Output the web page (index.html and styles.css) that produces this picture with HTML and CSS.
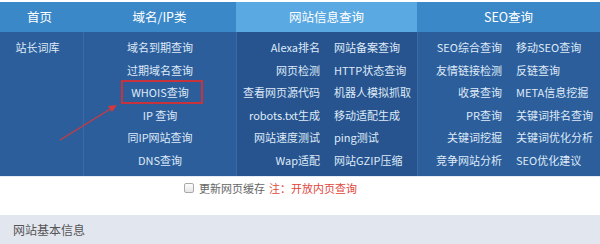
FILE: index.html
```html
<!DOCTYPE html>
<html>

<head>
    <meta charset="utf-8">
    <title>站长工具</title>
    <link rel="stylesheet" href="styles.css">
</head>

<body>
    <div class="nav">
        <div class="col col_home">
            <div class="tab">首页</div>
            <ul class="links">
                <li>站长词库</li>
            </ul>
        </div>
        <div class="col col_domain">
            <div class="tab">域名/IP类</div>
            <ul class="links">
                <li>域名到期查询</li>
                <li>过期域名查询</li>
                <li><span class="marked">WHOIS查询</span></li>
                <li>IP 查询</li>
                <li>同IP网站查询</li>
                <li>DNS查询</li>
            </ul>
        </div>
        <div class="col col_site active">
            <div class="tab">网站信息查询</div>
            <ul class="links two">
                <li>Alexa排名</li>
                <li>网站备案查询</li>
                <li>网页检测</li>
                <li>HTTP状态查询</li>
                <li>查看网页源代码</li>
                <li>机器人模拟抓取</li>
                <li>robots.txt生成</li>
                <li>移动适配生成</li>
                <li>网站速度测试</li>
                <li>ping测试</li>
                <li>Wap适配</li>
                <li>网站GZIP压缩</li>
            </ul>
        </div>
        <div class="col col_seo">
            <div class="tab">SEO查询</div>
            <ul class="links two">
                <li>SEO综合查询</li>
                <li>移动SEO查询</li>
                <li>友情链接检测</li>
                <li>反链查询</li>
                <li>收录查询</li>
                <li>META信息挖掘</li>
                <li>PR查询</li>
                <li>关键词排名查询</li>
                <li>关键词挖掘</li>
                <li>关键词优化分析</li>
                <li>竞争网站分析</li>
                <li>SEO优化建议</li>
            </ul>
        </div>
        <!-- red annotation arrow -->
        <svg class="arrow" width="600" height="176" viewBox="0 0 600 176">
            <line x1="60" y1="138" x2="112" y2="106" stroke="#d2383c" stroke-width="1.2" />
            <polygon points="117,103 108,104 112,110" fill="#d2383c" />
        </svg>
    </div>

    <div class="cache_row">
        <label class="cache">
            <input type="checkbox">
            <span class="box"></span>
            更新网页缓存
        </label>
        <span class="note">注：开放内页查询</span>
    </div>

    <div class="section_title">网站基本信息</div>
</body>

</html>
```

FILE: styles.css
```css
body {
    margin: 0;
    background-color: #fff;
    font-family: "Noto Sans CJK SC", "Noto Sans", sans-serif;
}

/* Top navigation */

.nav {
    position: relative;
    display: grid;
    grid-template-columns: 83px 153px 181px 1fr;
    margin-top: 2px;
    background-color: #2c5e9c;
    border-bottom: 1px solid #e4edf7;
}

.tab {
    height: 30px;
    line-height: 30px;
    text-align: center;
    background-color: #3a88c8;
    color: #fff;
    font-size: 12.5px;
}

.col_home .tab {
    padding-right: 4px;
}

.active {
    background-color: #27548f;
}

.active .tab {
    background-color: #5aa9e2;
}

.links {
    list-style: none;
    margin: 0;
    padding: 4px 0 5px 0;
    border-left: 1px solid #3a6ba7;
    font-size: 11px;
    line-height: 22.5px;
    color: #dfeaf7;
    text-align: center;
    white-space: nowrap;
}

.col_home .links {
    border-left: none;
    padding-right: 8px;
}

.links.two {
    display: grid;
    grid-template-columns: 1fr 1fr;
    column-gap: 14px;
}

.links.two li:nth-child(odd) {
    text-align: right;
}

.links.two li:nth-child(even) {
    text-align: left;
}

/* Red box drawn round WHOIS */

.marked {
    position: relative;
}

.marked:after {
    content: "";
    position: absolute;
    left: -10px;
    right: -14px;
    top: -4px;
    bottom: -4px;
    border: 2px solid #c8323c;
}

.arrow {
    position: absolute;
    left: 0;
    top: 0;
    pointer-events: none;
}

/* Cache checkbox */

.cache_row {
    display: flex;
    align-items: center;
    height: 22px;
    padding: 0 0 0 184px;
    font-size: 11px;
    color: #666;
}

.cache {
    display: flex;
    align-items: center;
}

.cache input {
    display: none;
}

.cache .box {
    display: inline-block;
    width: 8px;
    height: 8px;
    margin-right: 5px;
    border: 1px solid #a9a9a9;
    border-radius: 2px;
    background: linear-gradient(#fdfdfd, #e6e6e6);
}

.note {
    margin-left: 4px;
    color: #e0463c;
}

.section_title {
    margin-top: 16px;
    height: 30px;
    line-height: 30px;
    padding-left: 13px;
    background-color: #e2e6ef;
    color: #555;
    font-size: 12px;
}
```
